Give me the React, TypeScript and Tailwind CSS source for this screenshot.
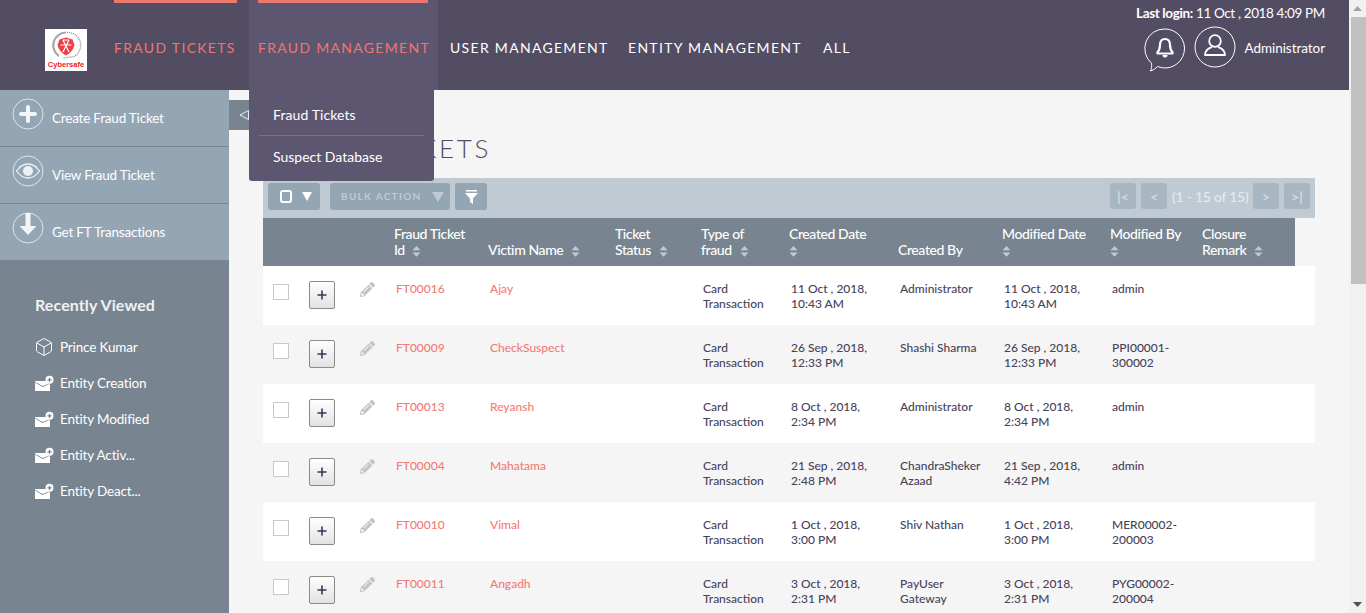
import React from "react";
import { FaPencilAlt } from "react-icons/fa";
import { Box } from "lucide-react";

const rows = [
  ["FT00016", "Ajay", "11 Oct , 2018,", "10:43 AM", "Administrator", "", "11 Oct , 2018,", "10:43 AM", "admin", ""],
  ["FT00009", "CheckSuspect", "26 Sep , 2018,", "12:33 PM", "Shashi Sharma", "", "26 Sep , 2018,", "12:33 PM", "PPI00001-", "300002"],
  ["FT00013", "Reyansh", "8 Oct , 2018,", "2:34 PM", "Administrator", "", "8 Oct , 2018,", "2:34 PM", "admin", ""],
  ["FT00004", "Mahatama", "21 Sep , 2018,", "2:48 PM", "ChandraSheker", "Azaad", "21 Sep , 2018,", "4:42 PM", "admin", ""],
  ["FT00010", "Vimal", "1 Oct , 2018,", "3:00 PM", "Shiv Nathan", "", "1 Oct , 2018,", "3:00 PM", "MER00002-", "200003"],
  ["FT00011", "Angadh", "3 Oct , 2018,", "2:31 PM", "PayUser", "Gateway", "3 Oct , 2018,", "2:31 PM", "PYG00002-", "200004"],
];

function Sort() {
  return (
    <svg width="9" height="13" viewBox="0 0 9 13" className="inline-block align-[-3px]" fill="#bfcad3">
      <path d="M4.500 1 8.500 5.200H.5zM.5 7.600h8l-4 4.200z" />
    </svg>
  );
}

function PlusIcon() {
  return (
    <svg width="32" height="32" viewBox="0 0 32 32" fill="none">
      <circle cx="16" cy="16" r="15" stroke="#dfe5ea" strokeWidth="1" />
      <path d="M16 9v14M9 16h14" stroke="#f2f4f6" strokeWidth="4" strokeLinecap="round" />
    </svg>
  );
}
function EyeIcon() {
  return (
    <svg width="32" height="32" viewBox="0 0 32 32" fill="none">
      <circle cx="16" cy="16" r="15" stroke="#dfe5ea" strokeWidth="1" />
      <path d="M4.500 16C8 11 12 9 16 9s8 2 11.500 7C24 21 20 23 16 23s-8-2-11.500-7Z" stroke="#eef1f4" strokeWidth="1.300" />
      <circle cx="16" cy="16" r="5" fill="#eef1f4" />
    </svg>
  );
}
function DownIcon() {
  return (
    <svg width="32" height="32" viewBox="0 0 32 32" fill="none">
      <circle cx="16" cy="16" r="15" stroke="#dfe5ea" strokeWidth="1" />
      <path d="M13.500 1h5v13h6L16 23 7.500 14h6z" fill="#f2f4f6" />
    </svg>
  );
}
function MailPlus() {
  return (
    <svg width="19" height="16" viewBox="0 0 19 16">
      <path d="M0 6h11.500a5.500 5.500 0 0 0 3.500 3.700V16H0V7.500l7.500 4.500L15 8.500l-.5-.3L7.500 11 0 6.800z" fill="#fff" />
      <circle cx="14.500" cy="4.800" r="4" fill="#fff" />
      <path d="M14.500 2.700v4.200M12.400 4.800h4.200" stroke="#78848f" strokeWidth="1.200" />
    </svg>
  );
}
function Logo() {
  return (
    <div className="w-[42px] h-[42px] bg-white flex flex-col items-center shrink-0">
      <svg width="42" height="31" viewBox="0 0 42 31" fill="none" className="shrink-0">
        <path d="M21 3.500A12.800 12.800 0 0 0 14 27" stroke="#a6a6a6" strokeWidth="2.200" />
        <path d="M22 3.500A12.800 12.800 0 0 1 29 27.500L18 29" stroke="#8f8f8f" strokeWidth="1.400" strokeDasharray="1 1" />
        <path d="M21 8.500l6.500 2 2 5.500c-1 4.500-4 8-8.500 10.500-4.500-2.500-7.500-6-8.500-10.500l2-5.500z" fill="#ee3f47" />
        <path d="M18 11l6 12M24 11l-6 12M15.500 16h11M18 11h6" stroke="#fff" strokeWidth="1.200" />
      </svg>
      <span className="text-[7.500px] leading-[9px] font-bold text-[#f0171f] font-['Liberation_Sans',sans-serif]">Cybersafe</span>
    </div>
  );
}

const navCls = "text-[14px] tracking-[1.300px] leading-none whitespace-nowrap pt-[6px]";
const pagerCls = "w-[26px] h-[26px] rounded-[3px] bg-[#a8b6c1] flex items-center justify-center text-[14px] font-bold text-[#d3dbe1]";

export default function App() {
  return (
    <div className="flex h-[613px] w-full overflow-hidden bg-[#f5f5f5] font-['Lato',sans-serif] text-[13px]">
      <div className="relative flex-1 min-w-0 flex flex-col">
        <header className="h-[90px] bg-[#534d64] flex items-center shrink-0 relative">
          <div className="ml-[45px] mr-[27px] mt-[10px]"><Logo /></div>
          <nav className="flex items-center h-full">
            <div className={`relative h-full w-[123px] flex items-center text-[#ee7670] ${navCls}`}>
              <span className="absolute top-0 left-0 right-0 h-[3px] bg-[#ee7670]" />
              FRAUD TICKETS
            </div>
            <div className={`relative h-full w-[189px] flex items-center text-[#ee7670] bg-[#5d5670] ml-[12px] pl-[9px] ${navCls}`}>
              <span className="absolute top-0 left-[9px] right-[10px] h-[3px] bg-[#ee7670]" />
              FRAUD MANAGEMENT
              <div className="absolute z-20 left-0 top-[90px] w-[185px] h-[91px] bg-[#5d5670] rounded-b-[3px] px-[10px] pt-[5px] text-[14px] tracking-normal text-white">
                <div className="h-[41px] box-border pl-[14px] flex items-center border-b border-[#787287] tracking-[0.100px]">Fraud Tickets</div>
                <div className="h-[42px] pl-[14px] flex items-center">Suspect Database</div>
              </div>
            </div>
            <div className={`text-white ml-[12px] w-[157px] ${navCls}`}>USER MANAGEMENT</div>
            <div className={`text-white ml-[21px] w-[174px] ${navCls}`}>ENTITY MANAGEMENT</div>
            <div className={`text-white ml-[21px] ${navCls}`}>ALL</div>
          </nav>
          <div className="ml-auto mr-[24px] self-stretch flex flex-col items-end text-white pt-[6px]">
            <div className="text-[13.500px] leading-[15px] tracking-[-0.370px]"><span className="font-bold">Last login:</span> 11 Oct , 2018 4:09 PM</div>
            <div className="flex items-center mt-[3px]">
              <svg width="42" height="46" viewBox="0 0 42 46" fill="none" className="mt-[3px]">
                <path d="M21 2a19.500 19.500 0 1 1-7.500 37.500C11.500 41.500 9.500 43 6.500 44c1-2 1.500-4.500 1-7.800A19.500 19.500 0 0 1 21 2Z" stroke="#fff" strokeWidth="1" fill="none" />
                <path d="M21 12c-3.500 0-5 2.500-5 6 0 3.500-.8 5.500-2.500 7v1.500h15V25c-1.700-1.500-2.500-3.500-2.500-7 0-3.500-1.500-6-5-6Z" stroke="#fff" strokeWidth="2.200" strokeLinejoin="round" />
                <path d="M18.500 28a2.500 2.500 0 0 0 5 0z" fill="#fff" />
              </svg>
              <svg width="42" height="42" viewBox="0 0 42 42" fill="none" className="ml-[8px] mb-[3px]">
                <circle cx="21" cy="21" r="20" stroke="#fff" strokeWidth="1" />
                <circle cx="21" cy="15" r="5.800" stroke="#fff" strokeWidth="1.800" />
                <path d="M18 21c-2.500 1-7 2.500-7 8h20c0-5.500-4.500-7-7-8" stroke="#fff" strokeWidth="1.800" strokeLinejoin="round" />
              </svg>
              <span className="text-[13.500px] ml-[8px] tracking-[-0.050px]">Administrator</span>
            </div>
          </div>
        </header>

        <div className="flex flex-1 min-h-0">
          <aside className="w-[229px] shrink-0 bg-[#78848f] text-white">
            <div className="bg-[#94a5b4]">
              {[["Create Fraud Ticket", <PlusIcon />], ["View Fraud Ticket", <EyeIcon />], ["Get FT Transactions", <DownIcon />]].map(([label, icon], i) => (
                <div key={i} className={`box-border flex pl-[12px] pt-[8px] ${i < 2 ? "h-[57px] border-b border-[#78848f]" : "h-[56px]"}`}>
                  {icon}
                  <span className="ml-[8px] mt-[12px] text-[13.500px] leading-[17px] tracking-[-0.200px]">{label as string}</span>
                </div>
              ))}
            </div>
            <h3 className="ml-[35px] mt-[35px] text-[16px] leading-[20px] font-bold tracking-[0.100px] text-[#f0f2f4]">Recently Viewed</h3>
            <ul className="ml-[35px] mt-[23px] flex flex-col gap-[18px] text-[13.500px] leading-[18px] tracking-[-0.150px]">
              <li className="flex items-center gap-[6px] -ml-[1px] h-[18px]"><Box size={20} strokeWidth={1.2} color="#fff" /><span>Prince Kumar</span></li>
              {["Entity Creation", "Entity Modified", "Entity Activ...", "Entity Deact..."].map((t) => (
                <li key={t} className="flex items-center gap-[6px]"><MailPlus /><span>{t}</span></li>
              ))}
            </ul>
          </aside>

          <main className="flex-1 min-w-0 relative">
            <div className="absolute left-0 top-[10px] w-[20px] h-[30px] bg-[#78848f] flex items-center pl-[10px]">
              <svg width="10" height="12" viewBox="0 0 10 12" fill="none"><path d="M9.500 1.500v9L1 6z" stroke="#e8ecef" strokeWidth="1" /></svg>
            </div>
            <div className="ml-[34px] mr-[34px]">
              <h1 className="pt-[43px] h-[88px] box-border text-[26px] leading-[30px] font-light tracking-[2.800px] text-[#534d64]">FRAUD TICKETS</h1>
              <div className="h-[40px] bg-[#bfcad3] flex items-start pt-[5px] pl-[5px] pr-[5px]">
                <div className="w-[52px] h-[27px] rounded-[3px] bg-[#94a5b4] flex items-center pl-[12px] gap-[10px]">
                  <span className="w-[12px] h-[13px] border-2 border-white rounded-[3px]" />
                  <svg width="10" height="9" viewBox="0 0 10 9"><path d="M0 0h10L5 9z" fill="#fff" /></svg>
                </div>
                <div className="ml-[10px] w-[120px] h-[27px] rounded-[3px] bg-[#94a5b4] flex items-center pl-[11px] text-[10px] font-bold tracking-[1.300px] text-[#bfcad3]">
                  BULK ACTION
                  <svg width="12" height="10" viewBox="0 0 12 10" className="ml-[10px]"><path d="M0 0h12L6 10z" fill="#bfcad3" /></svg>
                </div>
                <div className="ml-[5px] w-[32px] h-[27px] rounded-[3px] bg-[#94a5b4] flex items-center justify-center">
                  <svg width="13" height="14" viewBox="0 0 13 14"><path d="M1 0h11v1.500H1zM0 3h13L8 8.500V14L5 12V8.500z" fill="#fff" /></svg>
                </div>
                <div className="ml-auto flex items-center gap-[5px]">
                  {["|<", "<"].map((s) => (
                    <div key={s} className={pagerCls}>{s}</div>
                  ))}
                  <span className="w-[78px] whitespace-nowrap text-[14px] font-medium text-[#e4e9ed] -mr-[2px] tracking-[-0.250px]">(1 - 15 of 15)</span>
                  {[">", ">|"].map((s) => (
                    <div key={s} className={pagerCls}>{s}</div>
                  ))}
                </div>
              </div>
              <div className="w-[1032px] h-[48px] bg-[#78848f] grid grid-cols-[131px_94px_127px_86px_88px_109px_104px_108px_92px_93px] items-end pb-[8px] text-[14px] leading-[16px] font-medium text-white tracking-[-0.400px]">
                <div />
                <div>Fraud Ticket<br />Id <span className="ml-[4px]"><Sort /></span></div>
                <div>Victim Name <span className="ml-[5px]"><Sort /></span></div>
                <div>Ticket<br />Status <span className="ml-[5px]"><Sort /></span></div>
                <div>Type of<br />fraud <span className="ml-[5px]"><Sort /></span></div>
                <div>Created Date<br /><Sort /></div>
                <div>Created By</div>
                <div>Modified Date<br /><Sort /></div>
                <div>Modified By<br /><Sort /></div>
                <div>Closure<br />Remark <span className="ml-[5px]"><Sort /></span></div>
              </div>
              {rows.map((r, i) => (
                <div key={r[0]} className={`h-[59px] grid grid-cols-[46px_46px_40px_95px_127px_86px_88px_109px_104px_108px_92px_111px] leading-[15px] text-[12px] font-medium text-[#48435a] pt-[15px] box-border ${i % 2 ? "bg-[#f5f5f5]" : "bg-white"}`}>
                  <div className="pl-[10px]"><span className="block w-[16px] h-[16px] mt-[3px] bg-white border border-[#bfcad3]" /></div>
                  <div><span className="flex w-[26px] h-[28px] rounded-[2px] border border-[#8a8a8a] bg-gradient-to-b from-[#ffffff] to-[#e2e2e2] items-center justify-center text-[#333]">
                    <svg width="10" height="10" viewBox="0 0 10 10"><path d="M5 .5v9M.5 5h9" stroke="#3a3550" strokeWidth="1.600" /></svg>
                  </span></div>
                  <div className="pl-[5px] pt-[1px] text-[#c2c4c6]"><FaPencilAlt size={15} /></div>
                  <div className="text-[#f37b76] pl-[1px]">{r[0]}</div>
                  <div className="text-[#f37b76]">{r[1]}</div>
                  <div />
                  <div>Card<br />Transaction</div>
                  <div>{r[2]}<br />{r[3]}</div>
                  <div>{r[4]}<br />{r[5]}</div>
                  <div>{r[6]}<br />{r[7]}</div>
                  <div>{r[8]}<br />{r[9]}</div>
                  <div />
                </div>
              ))}
            </div>
          </main>
        </div>
      </div>
      <div className="w-[17px] shrink-0 bg-[#f1f1f1] flex flex-col relative">
        <div className="h-[17px] flex items-center justify-center">
          <svg width="9" height="5" viewBox="0 0 9 5"><path d="M4.500 0 9 5H0z" fill="#a3a3a3" /></svg>
        </div>
        <div className="ml-[2px] w-[15px] h-[267px] bg-[#c1c1c1]" />
        <div className="mt-auto h-[17px] flex items-center justify-center">
          <svg width="9" height="5" viewBox="0 0 9 5"><path d="M0 0h9L4.500 5z" fill="#505050" /></svg>
        </div>
      </div>
    </div>
  );
}
